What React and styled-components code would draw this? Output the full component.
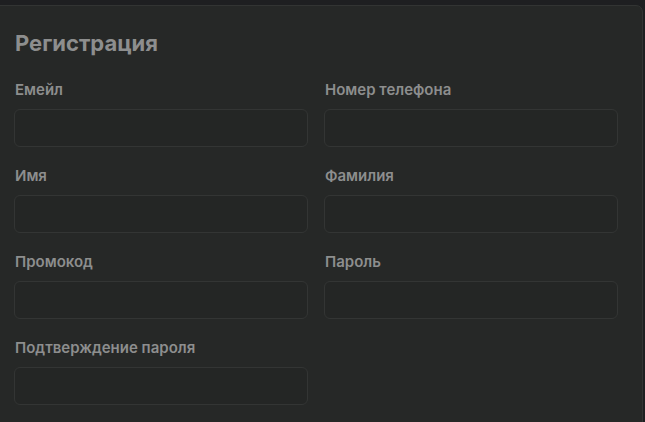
import React from "react";
import styled, { createGlobalStyle } from "styled-components";

const GlobalStyle = createGlobalStyle`
  html, body {
    margin: 0;
    padding: 0;
    background: #1e1f21;
    font-family: Inter, "Noto Sans", sans-serif;
  }
`;

const Page = styled.div`
  padding: 5px 2px 0 0;
`;

const Card = styled.div`
  margin-left: -1px;
  min-height: 420px;
  padding: 24px 25px 0 14px;
  background: #262827;
  border: 1px solid #323433;
  border-radius: 0 7px 0 0;
  box-sizing: border-box;
`;

const Title = styled.h2`
  margin: 0 0 0 1px;
  padding-bottom: 25px;
  font-size: 22px;
  font-weight: 700;
  color: #8d8e8e;
  line-height: 26px;
`;

const Grid = styled.div`
  display: grid;
  grid-template-columns: 294px 294px;
  column-gap: 16px;
  row-gap: 20px;
`;

const Field = styled.div`
  display: flex;
  flex-direction: column;
  gap: 10px;
`;

const Label = styled.label`
  padding-left: 1px;
  font-size: 15px;
  font-weight: 600;
  color: #8d8e8e;
  line-height: 18px;
`;

const Input = styled.input`
  height: 38px;
  box-sizing: border-box;
  background: #242625;
  border: 1px solid #333534;
  border-radius: 6px;
  color: #ccc;
  padding: 0 12px;
  font-size: 14px;
  outline: none;
`;

const fields = [
  { name: "email", label: "Емейл", type: "email" },
  { name: "phone", label: "Номер телефона", type: "tel" },
  { name: "firstName", label: "Имя", type: "text" },
  { name: "lastName", label: "Фамилия", type: "text" },
  { name: "promo", label: "Промокод", type: "text" },
  { name: "password", label: "Пароль", type: "password" },
  { name: "confirm", label: "Подтверждение пароля", type: "password" },
];

const App = () => (
  <Page>
    <GlobalStyle />
    <Card>
      <Title>Регистрация</Title>
      <Grid>
        {fields.map((f) => (
          <Field key={f.name}>
            <Label htmlFor={f.name}>{f.label}</Label>
            <Input id={f.name} name={f.name} type={f.type} />
          </Field>
        ))}
      </Grid>
    </Card>
  </Page>
);

export default App;
